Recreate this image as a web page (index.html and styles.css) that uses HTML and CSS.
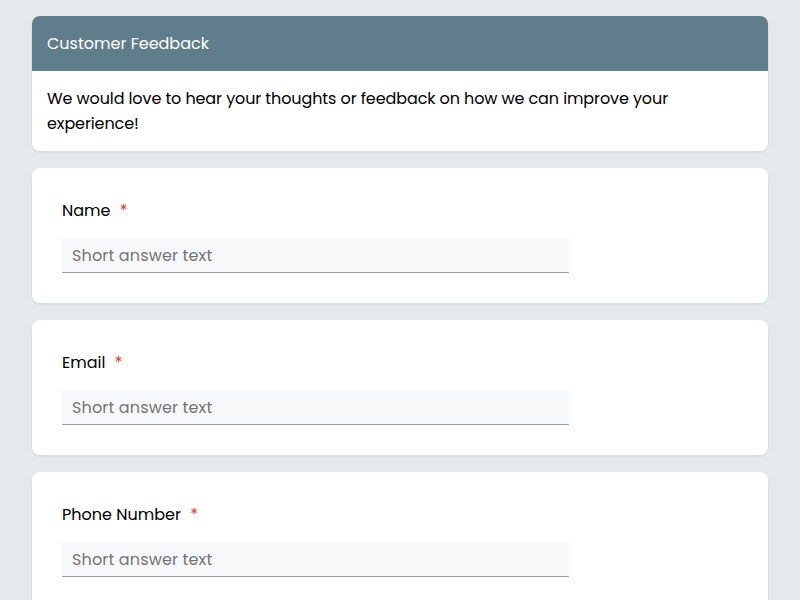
FILE: index.html
```html
<!DOCTYPE html>
<html lang="en">
<head>
<meta charset="utf-8">
<title>Customer Feedback</title>
<link rel="stylesheet" href="styles.css">
</head>
<body>
<main class="form">
  <section class="card intro">
    <header class="intro-head">Customer Feedback</header>
    <p class="intro-body">We would love to hear your thoughts or feedback on how we can improve your experience!</p>
  </section>
  <section class="card question">
    <label class="q-label">Name <span class="req">*</span></label>
    <input class="q-input" type="text" placeholder="Short answer text">
  </section>
  <section class="card question">
    <label class="q-label">Email <span class="req">*</span></label>
    <input class="q-input" type="text" placeholder="Short answer text">
  </section>
  <section class="card question">
    <label class="q-label">Phone Number <span class="req">*</span></label>
    <input class="q-input" type="text" placeholder="Short answer text">
  </section>
</main>
</body>
</html>
```
FILE: styles.css
```css
* { box-sizing: border-box; }
html, body { margin: 0; padding: 0; }
body {
  background: #e4e9ec;
  font-family: "Poppins", "Inter", "Noto Sans", sans-serif;
  color: #000;
}
.form {
  padding: 16px 32px;
  display: flex;
  flex-direction: column;
  gap: 17px;
}
.card {
  background: #fff;
  border-radius: 8px;
  box-shadow: 0 1px 3px rgba(0,0,0,0.08);
  overflow: hidden;
}
.intro-head {
  background: #607d8b;
  color: #fff;
  font-size: 16px;
  line-height: 25px;
  padding: 15px;
}
.intro-body {
  margin: 0;
  padding: 15px;
  font-size: 16px;
  letter-spacing: -0.1px;
  line-height: 25px;
}
.question {
  padding: 31px 30px 30px;
  display: flex;
  flex-direction: column;
  gap: 15px;
}
.q-label {
  font-size: 16px;
  line-height: 24px;
}
.req {
  color: #d93025;
  margin-left: 5px;
}
.q-input {
  width: 507px;
  height: 35px;
  border: none;
  border-bottom: 1px solid #9e9e9e;
  background: #f7f8fa;
  padding: 0 10px;
  font-family: inherit;
  font-size: 16px;
  letter-spacing: 0.15px;
  outline: none;
}
.q-input::placeholder { color: #757575; }
```
